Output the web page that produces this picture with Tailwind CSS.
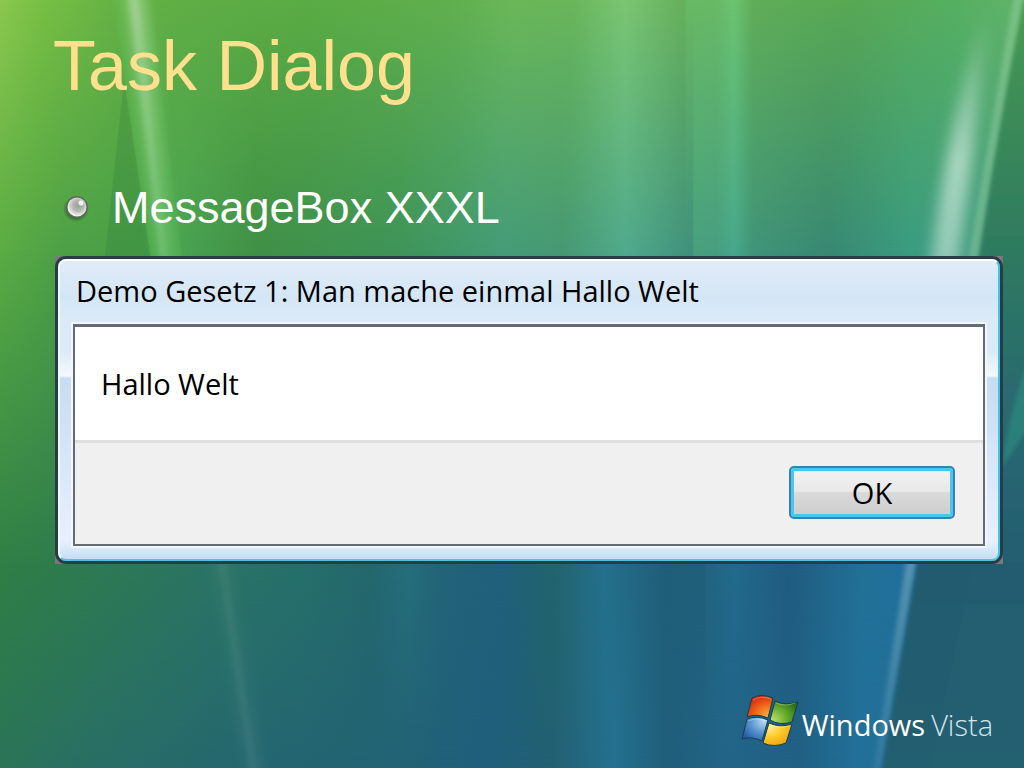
<!DOCTYPE html>
<html lang="de">
<head>
    <meta charset="UTF-8">
    <meta name="viewport" content="width=device-width, initial-scale=1.0">
    <title>Task Dialog</title>
    <script src="https://cdn.jsdelivr.net/npm/@tailwindcss/browser@4"></script>
</head>
<body class="bg-[#24646f]">
    <main class="relative min-h-screen overflow-hidden flex flex-col pl-[55px] pr-[21px] font-['Liberation_Sans',Arial,sans-serif]">

        <!-- Aurora background -->
        <svg class="absolute inset-0 w-full h-full" viewBox="0 0 1024 768" preserveAspectRatio="none" aria-hidden="true">
            <defs>
                <linearGradient id="row1" gradientUnits="userSpaceOnUse" x1="0" x2="1024" y1="0" y2="0">
                    <stop offset="0" stop-color="#8cc84e"/><stop offset=".04" stop-color="#78c044"/><stop offset=".11" stop-color="#66b245"/><stop offset=".18" stop-color="#5fae45"/><stop offset=".3" stop-color="#5aac44"/><stop offset=".44" stop-color="#60b04e"/><stop offset=".5" stop-color="#6ab858"/><stop offset=".56" stop-color="#69b75b"/><stop offset=".61" stop-color="#7ac672"/><stop offset=".669" stop-color="#66b05a"/><stop offset=".67" stop-color="#69b963"/><stop offset=".7" stop-color="#68ba66"/><stop offset=".717" stop-color="#6cc470"/><stop offset=".735" stop-color="#60ae58"/><stop offset=".83" stop-color="#58a854"/><stop offset=".93" stop-color="#55b060"/><stop offset="1" stop-color="#62b46a"/>
                </linearGradient>
                <linearGradient id="row2" gradientUnits="userSpaceOnUse" x1="0" x2="1024" y1="0" y2="0">
                    <stop offset="0" stop-color="#5aac44"/><stop offset=".06" stop-color="#4ea046"/><stop offset=".14" stop-color="#48a048"/><stop offset=".18" stop-color="#48a250"/><stop offset=".25" stop-color="#409046"/><stop offset=".39" stop-color="#3e9458"/><stop offset=".49" stop-color="#459c78"/><stop offset=".55" stop-color="#469872"/><stop offset=".61" stop-color="#50aa8c"/><stop offset=".676" stop-color="#40907a"/><stop offset=".678" stop-color="#48a080"/><stop offset=".7" stop-color="#469e80"/><stop offset=".717" stop-color="#48a88c"/><stop offset=".735" stop-color="#409478"/><stop offset=".81" stop-color="#388872"/><stop offset=".89" stop-color="#3a9c80"/><stop offset="1" stop-color="#4a9c84"/>
                </linearGradient>
                <linearGradient id="row3" gradientUnits="userSpaceOnUse" x1="0" x2="1024" y1="0" y2="0">
                    <stop offset="0" stop-color="#2f7f46"/><stop offset=".05" stop-color="#2e7c4c"/><stop offset=".13" stop-color="#2c7858"/><stop offset=".2" stop-color="#2a7464"/><stop offset=".29" stop-color="#26706a"/><stop offset=".36" stop-color="#23686c"/><stop offset=".4" stop-color="#256e7c"/><stop offset=".43" stop-color="#226478"/><stop offset=".49" stop-color="#20607c"/><stop offset=".54" stop-color="#22646c"/><stop offset=".59" stop-color="#25708c"/><stop offset=".65" stop-color="#205e78"/><stop offset=".688" stop-color="#205f7a"/><stop offset=".69" stop-color="#22647e"/><stop offset=".717" stop-color="#226a8c"/><stop offset=".77" stop-color="#205c80"/><stop offset=".84" stop-color="#227096"/><stop offset=".88" stop-color="#20709c"/><stop offset="1" stop-color="#20709c"/>
                </linearGradient>
                <linearGradient id="row4" gradientUnits="userSpaceOnUse" x1="0" x2="1024" y1="0" y2="0">
                    <stop offset="0" stop-color="#2a7458"/><stop offset=".1" stop-color="#286e66"/><stop offset=".25" stop-color="#246670"/><stop offset=".39" stop-color="#226274"/><stop offset=".47" stop-color="#1f5f7c"/><stop offset=".54" stop-color="#226072"/><stop offset=".6" stop-color="#257090"/><stop offset=".65" stop-color="#1f5f7a"/><stop offset=".71" stop-color="#226488"/><stop offset=".78" stop-color="#206084"/><stop offset=".84" stop-color="#22709a"/><stop offset="1" stop-color="#216a8c"/>
                </linearGradient>
                <linearGradient id="fade2" gradientUnits="userSpaceOnUse" x1="0" x2="0" y1="0" y2="250"><stop offset="0" stop-color="#fff" stop-opacity="0"/><stop offset="1" stop-color="#fff"/></linearGradient>
                <linearGradient id="fade3" gradientUnits="userSpaceOnUse" x1="0" x2="0" y1="250" y2="564"><stop offset="0" stop-color="#fff" stop-opacity="0"/><stop offset="1" stop-color="#fff"/></linearGradient>
                <linearGradient id="fade4" gradientUnits="userSpaceOnUse" x1="0" x2="0" y1="564" y2="768"><stop offset="0" stop-color="#fff" stop-opacity="0"/><stop offset="1" stop-color="#fff"/></linearGradient>
                <mask id="m2" style="mask-type:alpha"><rect width="1024" height="768" fill="url(#fade2)"/></mask>
                <mask id="m3" style="mask-type:alpha"><rect width="1024" height="768" fill="url(#fade3)"/></mask>
                <mask id="m4" style="mask-type:alpha"><rect width="1024" height="768" fill="url(#fade4)"/></mask>
                <linearGradient id="side" gradientUnits="userSpaceOnUse" x1="0" x2="0" y1="0" y2="768">
                    <stop offset="0" stop-color="#4a9a50"/><stop offset=".14" stop-color="#3c8c58"/><stop offset=".33" stop-color="#2e7a60"/><stop offset=".52" stop-color="#2a6a70"/><stop offset=".74" stop-color="#225a70"/><stop offset="1" stop-color="#245e70"/>
                </linearGradient>
                <linearGradient id="streak" gradientUnits="userSpaceOnUse" x1="0" x2="0" y1="0" y2="768">
                    <stop offset="0" stop-color="#c0e0b4" stop-opacity=".6"/><stop offset=".33" stop-color="#a0e0a0" stop-opacity=".35"/><stop offset=".75" stop-color="#78a898" stop-opacity=".15"/><stop offset="1" stop-color="#78a0a0" stop-opacity=".2"/>
                </linearGradient>
                <linearGradient id="beam" gradientUnits="userSpaceOnUse" x1="0" x2="0" y1="0" y2="400">
                    <stop offset="0" stop-color="#c8e6d8" stop-opacity="0"/><stop offset=".4" stop-color="#c8e6d8" stop-opacity=".75"/><stop offset="1" stop-color="#c8e6d8" stop-opacity=".4"/>
                </linearGradient>
                <linearGradient id="lowBeam" gradientUnits="userSpaceOnUse" x1="0" x2="0" y1="560" y2="768">
                    <stop offset="0" stop-color="#8cb4c4" stop-opacity=".5"/><stop offset="1" stop-color="#8cb4c4" stop-opacity=".15"/>
                </linearGradient>
                <filter id="b2" x="-50%" y="-10%" width="200%" height="120%"><feGaussianBlur stdDeviation="2"/></filter>
                <filter id="b6" x="-100%" y="-10%" width="300%" height="120%"><feGaussianBlur stdDeviation="7"/></filter>
            </defs>
            <rect width="1024" height="768" fill="url(#row1)"/>
            <rect width="1024" height="768" fill="url(#row2)" mask="url(#m2)"/>
            <rect width="1024" height="768" fill="url(#row3)" mask="url(#m3)"/>
            <rect width="1024" height="768" fill="url(#row4)" mask="url(#m4)"/>

            <!-- left fold -->
            <path d="M124 80 150 256H105Z" fill="#2c7838" fill-opacity=".25"/>
            <path d="M114 0H150L182 256 225 564H198L151 256Z" fill="#58c050" fill-opacity=".22"/>
            <path d="M126-10H143L173 256 228 564 262 780H250L216 564 158 256Z" fill="url(#streak)" filter="url(#b6)"/>
            <path d="M128-10H137L166 256 226 564 258 780H252L218 564 160 256Z" fill="url(#streak)" fill-opacity=".5" filter="url(#b2)"/>

            <!-- right fold -->
            <path d="M988 10Q952 90 930 270L900 400H944L960 250Q978 120 988 10Z" fill="url(#beam)" filter="url(#b6)"/>
            <path d="M1015-10Q990 130 968 260H980Q1002 130 1026-10Z" fill="#a0d4a8" fill-opacity=".4" filter="url(#b2)"/>
            <path d="M908 550H919L880 780H872Z" fill="url(#lowBeam)" filter="url(#b2)"/>
            <path d="M1024 0Q1001 110 979 256L917 564 880 780H1040V0Z" fill="url(#side)" filter="url(#b2)"/>
            <path d="M1034 340Q1014 400 1003 470L973 564 930 768H1034Z" fill="#2c9080" fill-opacity=".06"/>
            <path d="M1034 345Q1012 400 1000 470L1034 420Z" fill="#2c9080" fill-opacity=".6" filter="url(#b2)"/>
        </svg>

        <h1 class="relative mt-[26px] -ml-0.5 text-[70px] leading-[80px] text-[#ffe08f]">Task Dialog</h1>

        <ul class="relative mt-[75px] mb-[22px]">
            <li class="flex items-center text-[45px] leading-[53px] text-white">
                <svg class="ml-2 mr-[21px] w-[28px] h-[28px] shrink-0" viewBox="0 0 28 28" aria-hidden="true">
                    <defs>
                        <radialGradient id="ball" cx=".55" cy=".42" r=".55"><stop offset="0" stop-color="#9a9d98"/><stop offset=".55" stop-color="#b8bab6"/><stop offset="1" stop-color="#f2f3f0"/></radialGradient>
                        <radialGradient id="ballShadow"><stop offset=".7" stop-color="#28512c" stop-opacity=".6"/><stop offset="1" stop-color="#28512c" stop-opacity="0"/></radialGradient>
                    </defs>
                    <circle cx="13" cy="15" r="13" fill="url(#ballShadow)"/>
                    <circle cx="14" cy="13" r="11" fill="#5d6c5a"/>
                    <circle cx="14" cy="13" r="9.5" fill="url(#ball)"/>
                    <circle cx="18" cy="9" r="2.5" fill="#fff" fill-opacity=".8"/>
                </svg>
                MessageBox XXXL
            </li>
        </ul>

        <section role="dialog" aria-labelledby="dialogTitle" class="relative bg-[#77797a] font-['Open_Sans','Noto_Sans',sans-serif] text-black">
            <div class="rounded-[11px] border-[3px] border-[#293c46]">
                <div class="rounded-lg border-2 border-t-white border-l-[#e9fbff] border-r-[#35caf5] border-b-[#4fc2df] bg-[linear-gradient(#e0ecf8_0px,#d4e6f6_36px,#dceaf8_60px,#dceaf8_90px,#f4f8fc_115px,#c8dcf0_117px,#d8e6f8_200px,#e8f0ff_280px,#c4dcf0_300px)] px-[13px] pb-[13px]">
                    <h2 id="dialogTitle" class="h-[63px] pl-[3px] pt-[10px] text-[29px] leading-[40px] whitespace-nowrap">Demo Gesetz 1: Man mache einmal Hallo Welt</h2>
                    <div class="border-2 border-t-[3px] border-[#646b74] outline-2 outline-[#f0f7ff]">
                        <p class="bg-white pt-[37px] pb-[36px] pl-[26px] text-[29px] leading-[40px]">Hallo Welt</p>
                        <div class="flex justify-end border-t-3 border-[#dfdfdf] bg-[#f0f0f0] pt-[23px] pb-[25px] pr-7">
                            <button type="button" class="w-[166px] h-[53px] rounded-[5px] border-2 border-[#3c7fb1] bg-[linear-gradient(#f3f3f3_0%,#e8e8e8_48%,#dadada_50%,#cccccc_100%)] shadow-[inset_0_0_0_3px_#48c8f0] text-[29px] leading-[40px]">OK</button>
                        </div>
                    </div>
                </div>
            </div>
        </section>

        <footer class="relative mt-auto mb-[20px] mr-[10px] flex items-center justify-end font-['Open_Sans','Noto_Sans',sans-serif] text-white">
            <svg class="w-[58px] h-[54px] mr-[3px] shrink-0" viewBox="0 0 58 54" role="img" aria-label="Windows-Logo">
                <defs>
                    <radialGradient id="red" cx=".85" cy=".95" r="1"><stop offset="0" stop-color="#ffb43c"/><stop offset=".5" stop-color="#f0701c"/><stop offset="1" stop-color="#d8280c"/></radialGradient>
                    <radialGradient id="green" cx=".1" cy=".8" r="1"><stop offset="0" stop-color="#b4dc6c"/><stop offset=".5" stop-color="#68ac2c"/><stop offset="1" stop-color="#286c18"/></radialGradient>
                    <radialGradient id="blue" cx=".85" cy=".15" r="1"><stop offset="0" stop-color="#b8dcf4"/><stop offset=".5" stop-color="#5c98d0"/><stop offset="1" stop-color="#2458a4"/></radialGradient>
                    <radialGradient id="yellow" cx=".2" cy=".15" r="1"><stop offset="0" stop-color="#fff09c"/><stop offset=".5" stop-color="#fcc828"/><stop offset="1" stop-color="#f09c0c"/></radialGradient>
                </defs>
                <g stroke="#173f4c" stroke-width="1" stroke-linejoin="round">
                    <path d="M11 4Q20-1 32 4L27 24Q15 19 6 23Z" fill="url(#red)"/>
                    <path d="M34 7Q44 12 57 8L51 28Q39 32 29 26Z" fill="url(#green)"/>
                    <path d="M6 25Q16 21 27 26L21 47Q11 42 1 45Z" fill="url(#blue)"/>
                    <path d="M28 29Q39 34 51 30L45 49Q33 54 22 49Z" fill="url(#yellow)"/>
                </g>
                <path d="M12 6Q20 1 30 5M35 9Q44 13 54 9M7 27Q16 23 25 27M29 31Q39 35 48 32" fill="none" stroke="#fff" stroke-opacity=".3"/>
            </svg>
            <p class="flex gap-[6px] text-[29px] leading-[40px] pt-[8px]"><span>Windows</span><span class="font-light text-[#d3e3e9]">Vista</span></p>
        </footer>
    </main>
</body>
</html>
